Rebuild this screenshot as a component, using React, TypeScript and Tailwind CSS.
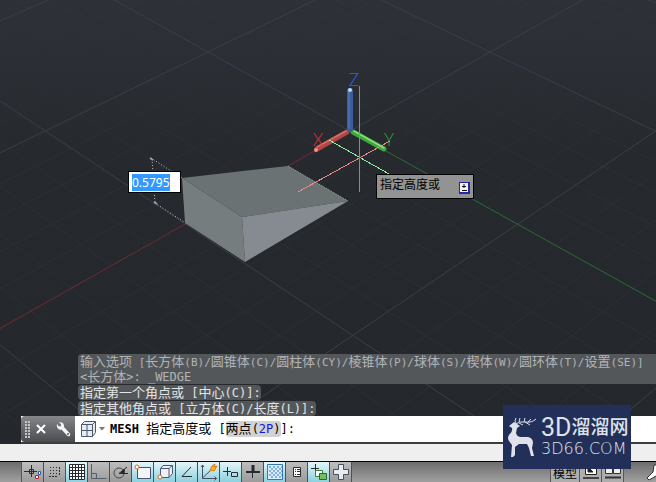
import type { ReactNode } from 'react'

type Point = [number, number]

// perspective mapping of the ground plane, one major cell = one unit
const ORIGIN: Point = [350, 131]
const AX = 208 * 1.0825 - 350
const BX = 490 * 1.0813 - 350
const AY = 52 * 1.0825 - 131
const BY = 52 * 1.0813 - 131

function project(u: number, v: number): Point {
  const w = 1 + 0.0825 * u + 0.0813 * v
  return [(AX * u + BX * v + ORIGIN[0]) / w, (AY * u + BY * v + ORIGIN[1]) / w]
}

function segment(a: Point, b: Point) {
  return `M${a.join(' ')}L${b.join(' ')}`
}

function gridPath(major: boolean) {
  const parts: string[] = []
  for (let i = -20; i <= 20; i++) {
    if ((i % 5 === 0) !== major) continue
    const k = i / 5
    // the near halves of the two axes have their own colours
    parts.push(segment(project(k, i === 0 ? 0 : -4), project(k, 4)))
    parts.push(segment(project(i === 0 ? 0 : -4, k), project(4, k)))
  }
  return parts.join('')
}

function Scene() {
  return (
    <svg
      className="absolute inset-0 h-full w-full"
      viewBox="0 0 656 444"
      preserveAspectRatio="xMinYMin slice"
      fill="none"
    >
      <defs>
        <linearGradient id="sky" x1="0" y1="0" x2="0" y2="1">
          <stop offset="0" stopColor="#2e3137" />
          <stop offset="0.35" stopColor="#26292e" />
          <stop offset="1" stopColor="#24282c" />
        </linearGradient>
      </defs>
      <rect width="656" height="444" fill="url(#sky)" />
      <path d={gridPath(false)} stroke="#2c3036" />
      <path d={gridPath(true)} stroke="#3b3e48" />
      <path d={segment(ORIGIN, project(0, -4))} stroke="#74292f" />
      <path d={segment(ORIGIN, project(-4, 0))} stroke="#2d6a34" />

      <g stroke="#c4c8cc" strokeDasharray="1 2">
        <path d="M151 158L182 178" />
        <path d="M152 159L155 203" />
        <path d="M155 203L184 222" />
      </g>
      <path d="M150 158l3 2M154 202l3 2" stroke="#9a9ea3" strokeWidth="2" />

      <path d="M182 178L288 166L348 201L242 217Z" fill="#6a7274" />
      <path d="M182 178L242 217L245 262L185 223Z" fill="#757d7f" />
      <path d="M242 217L348 201L245 262Z" fill="#858b91" />
      <path d="M288 166L348 201" stroke="#a5abae" strokeDasharray="1 1" />

      <g strokeLinecap="round">
        <path d="M347 132L317 149" stroke="#b54445" strokeWidth="5" />
        <path d="M346 131L317 147" stroke="#d36e6b" strokeWidth="1.500" />
        <path d="M353 132L384 149" stroke="#3fa83c" strokeWidth="5" />
        <path d="M354 131L384 148" stroke="#7fe279" strokeWidth="1.500" />
        <path d="M350 91L350 129" stroke="#3c5d9b" strokeWidth="6" />
        <path d="M349 92L349 128" stroke="#4a6dac" strokeWidth="2" />
      </g>
      <circle cx="350" cy="90" r="2" fill="#b8dcf8" />
      <circle cx="316" cy="150" r="2" fill="#e8958f" />

      <g className="font-[Lato,sans-serif] font-light" fontSize="17" textAnchor="middle">
        <text x="354" y="86" fill="#2c62f0">Z</text>
        <text x="318" y="146" fill="#e5303f">X</text>
        <text x="389" y="146" fill="#2fa035">Y</text>
      </g>

      <g shapeRendering="crispEdges">
        <path d="M329 140L389 174" stroke="#90ee9a" />
        <path d="M298 192L390 141" stroke="#e88a8c" />
        <path d="M359 86h1v106h-1z" fill="#7f7df0" />
      </g>
    </svg>
  )
}

// latin runs are set in the monospaced face, smaller than the hanzi
function Prompt({ text, small }: { text: string; small?: boolean }) {
  return (
    <>
      {text.split(/([\x20-\x7e]+)/).map((run, i) =>
        i % 2 ? (
          <span key={i} className={small ? 'text-[11px]' : 'text-[12px]'}>{run}</span>
        ) : (
          run
        ),
      )}
    </>
  )
}

function History() {
  const line = 'h-[15px] whitespace-pre pl-[2px] leading-[15px]'
  return (
    <div className="relative ml-[78px] flex flex-col items-start gap-px overflow-hidden text-[13px] text-[#e2e4e5]">
      <div className="w-full rounded-tl-sm bg-[#54575a] text-[#b1b4b6]">
        <p className={line}>
          <Prompt
            small
            text="输入选项 [长方体(B)/圆锥体(C)/圆柱体(CY)/棱锥体(P)/球体(S)/楔体(W)/圆环体(T)/设置(SE)]"
          />
        </p>
        <p className={line}>
          <Prompt text="<长方体>: _WEDGE" />
        </p>
      </div>
      <p className={`${line} rounded-sm bg-[#54575a]`}>
        <Prompt text="指定第一个角点或 [中心(C)]:" />
      </p>
      <p className={`${line} rounded-sm bg-[#54575a]`}>
        <Prompt text="指定其他角点或 [立方体(C)/长度(L)]:" />
      </p>
    </div>
  )
}

function CommandLine() {
  return (
    <div className="relative ml-[21px] flex h-7 border-b-2 border-[#3b3d40] bg-white text-[13px] text-black">
      <div className="flex w-[54px] items-center rounded-l-sm bg-gradient-to-b from-[#85878a] to-[#4a4c4f] pl-1">
        <svg width="6" height="17" viewBox="0 0 6 17" fill="#c5c6c8">
          {[0, 3, 6, 9, 12, 15].map((y) => (
            <path key={y} d={`M0 ${y}h2v2h-2zM3 ${y}h2v2h-2z`} />
          ))}
        </svg>
        <button aria-label="关闭" className="ml-[5px]">
          <svg width="10" height="10" viewBox="0 0 10 10" stroke="#fff" strokeWidth="2">
            <path d="M1 1l8 8M9 1L1 9" />
          </svg>
        </button>
        <button aria-label="自定义" className="ml-[10px]">
          <svg width="15" height="15" viewBox="0 0 15 15" fill="#f4f4f4">
            <path d="M1 2L3 4.500L5 4L5 2L3 0.500C5.500-.5 8.500 1 8 5L14 11.500C15 13.500 13 15 11.500 14L5.500 7.500C3 8.500 0 6 1 2Z" />
            <circle cx="12" cy="12" r="1" fill="#5a5c5f" />
          </svg>
        </button>
      </div>
      <button aria-label="最近使用的命令" className="ml-[5px] flex items-center gap-[2px]">
        <svg width="17" height="17" viewBox="0 0 17 17" stroke="#4a586c" fill="#e6edf5">
          <path d="M1.500 3.500L4.500 0.500H15.500V11.500L12.500 15.500H1.500Z" />
          <path d="M1.500 3.500H12.500V15.500M12.500 3.500L15.500 0.500M7 3.500V15.500M1.500 9.500H12.500" fill="none" />
        </svg>
        <svg width="6" height="4" viewBox="0 0 6 4" fill="#777"><path d="M0 0h6L3 3.500z" /></svg>
      </button>
      <p className="ml-[5px] whitespace-pre leading-[26px]">
        <b className="text-[12px]">MESH</b>
        <Prompt text=" 指定高度或 [" />
        <button className="rounded-[3px] bg-[#d2d2d2] leading-4">
          两点<span className="text-[12px]">(<span className="text-[#1414e0]">2P</span>)</span>
        </button>
        <Prompt text="]:" />
      </p>
    </div>
  )
}

const toggles: { name: string; on?: boolean; icon: ReactNode }[] = [
  { name: '推断约束', icon: <><path d="M0 8.500h13M7.500 2v12M5.500 6.500h4v4h-4z" /><path d="M14.500 8.500h2v3h-2z" stroke="#2858b0" fill="#fff" /><path d="M11.500 12.500h3v3h-3z" stroke="#c02020" fill="#fff" /></> },
  { name: '捕捉模式', icon: <><path d="M4 4.500h9M4 7.500h9M4 10.500h7" strokeDasharray="1 2" /><path d="M3 13.500h9M13.500 4v9" strokeDasharray="2 1" /></> },
  { name: '栅格显示', on: true, icon: <path d="M1.500 1.500h15v15h-15zM4.500 1v15M7.500 1v15M10.500 1v15M13.500 1v15M1 4.500h16M1 7.500h16M1 10.500h16M1 13.500h16" fill="#fff" /> },
  { name: '正交模式', icon: <path d="M1.500 1v14.500h15M1.500 10.500h5v5" stroke="#54606a" /> },
  { name: '极轴追踪', icon: <><circle cx="7" cy="10" r="5" stroke="#44484c" /><path d="M7 10.500L15 4M7 10.500h9M12 6v4" /><path d="M9 9.500l3-3v3z" fill="#111" /></> },
  { name: '对象捕捉', on: true, icon: <><path d="M3.500 4.500h13v11h-13z" fill="#f2f4f8" stroke="#43536c" /><circle cx="3" cy="4" r="2" fill="#fff" stroke="#e06a20" /></> },
  { name: '三维对象捕捉', on: true, icon: <><path d="M4.500 5.500L7 2.500h9.500v8L13 14.500H4.500zM4.500 5.500H13v9M13 5.500l3.500-3" fill="#eef0f6" stroke="#4b5a70" /><circle cx="4" cy="14" r="2" fill="#fff" stroke="#e06a20" /></> },
  { name: '对象捕捉追踪', on: true, icon: <path d="M13 4L4 13.500h10" /> },
  { name: '动态UCS', on: true, icon: <><path d="M2.500 2v13.500h14M2.500 15L12 6M1 4l1.500-2L4 4M14.500 13.500l2 2-2 2" stroke="#405060" /><path d="M10 8l2-5 3-2-1 3 3-1-3 5-2-1z" fill="#ffb420" stroke="#d97a10" /></> },
  { name: '动态输入', on: true, icon: <path d="M1 8.500h8M5.500 4v9M9.500 9.500h6v4h-6z" /> },
  { name: '线宽', icon: <><path d="M2 9h14" strokeWidth="2" /><path d="M8.500 3v12" /><path d="M9 2v7" strokeWidth="3" /></> },
  { name: '透明度', on: true, icon: <><path d="M1.500 1.500h15v15h-15z" fill="#d8ecfa" stroke="#3578b8" /><path d="M3 4h13M3 8h13M3 12h13" strokeDasharray="2 2" strokeWidth="2" stroke="#83b3de" /><path d="M5 6h11M5 10h11M5 14h11" strokeDasharray="2 2" strokeWidth="2" stroke="#83b3de" /></> },
  { name: '快捷特性', icon: <><path d="M5.500 4.500h7v9h-7z" fill="#fff" /><path d="M7 6.500h1M9 6.500h3M7 8.500h1M9 8.500h3M7 11.500h1M9 11.500h3" /></> },
  { name: '选择循环', on: true, icon: <><path d="M1 5.500h8M5.500 1v8" /><path d="M5.500 7.500h7v6h-7z" fill="#fff" stroke="#348034" /><path d="M9.500 10.500h7v6h-7z" fill="#77bd5b" stroke="#286928" /></> },
  { name: '注释监视器', icon: <path d="M6.500 1.500h5v5h5v5h-5v5h-5v-5h-5v-5h5z" fill="#e8ecf0" stroke="#45505c" /> },
]

function StatusBar() {
  const tab = 'flex h-full items-start justify-center border-r border-[#55585a] bg-[#aeaeae]'
  return (
    <footer className="flex h-[21px] shrink-0 overflow-hidden border-t border-black bg-gradient-to-b from-[#6d6d6d] to-[#a0a0a0] pl-[21px]">
      <div className="flex border-l border-[#55585a]">
        {toggles.map(({ name, on, icon }) => (
          <button
            key={name}
            aria-label={name}
            aria-pressed={!!on}
            className={`flex w-[22px] justify-center border-r border-[#4c5254] pt-px ${
              on ? 'bg-gradient-to-b from-[#e2f6fa] to-[#8ed0de]' : 'bg-gradient-to-b from-[#bdbdbd] to-[#9c9c9c]'
            }`}
          >
            <svg width="18" height="18" viewBox="0 0 18 18" fill="none" stroke="#282b2f">
              {icon}
            </svg>
          </button>
        ))}
      </div>
      <div className="mr-[22px] ml-auto flex">
        <button className={`${tab} w-[30px] border-l text-[12px] leading-[24px] text-black`}>模型</button>
        <button aria-label="布局" className={`${tab} w-[22px]`}>
          <svg width="18" height="18" viewBox="0 0 18 18" fill="#fff" stroke="#222">
            <path d="M3.500 1.500h11v11h-11z" />
            <path d="M6 5l5 5H6z" fill="#222" />
            <path d="M1 16h16" strokeWidth="2" stroke="#444" />
          </svg>
        </button>
        <button aria-label="快速查看图形" className={`${tab} w-[22px]`}>
          <svg width="18" height="18" viewBox="0 0 18 18" fill="#eee" stroke="#333">
            <path d="M1.500 3.500h7v8h-7zM9.500 3.500h7v8h-7z" />
            <path d="M1 15.500h16" strokeWidth="2" />
          </svg>
        </button>
      </div>
      <button aria-label="注释比例" className="-mr-2 shrink-0">
        <svg width="18" height="18" viewBox="0 0 18 18" fill="#fff" stroke="#333">
          <path d="M8 2h3l1 7 5 5v3l-7-4-7 4-2-2 6-6z" />
        </svg>
      </button>
    </footer>
  )
}

function Logo() {
  return (
    <div className="absolute right-[25px] bottom-[13px] flex h-16 w-32 items-center bg-[#222f58] text-[#dfe2ea]">
      <svg className="ml-1 shrink-0" width="32" height="42" viewBox="0 0 32 42" fill="none" stroke="#dfe2ea">
        <path
          d="M2 10L7 6L10 8L13 10L10 12L9 17Q10 21 14 21L21 21Q26 22 26 27L25 32L27 40H24L22 32L20 28L12 28L8 31L8 39L6 41H4L5 29L2 25Q0 22 2 19Q6 16 5 12Z"
          fill="#dfe2ea"
          stroke="none"
        />
        <path d="M9 8Q12 5 18 6Q25 7 29 3M9 7Q7 5 9 2M12 6L13 2M17 6L18 2M21 6L24 3M12 7L16 9M18 6L23 9" />
      </svg>
      <div className="ml-[2px] whitespace-nowrap">
        <p className="flex items-center font-[Roboto,'Noto_Sans_CJK_SC',sans-serif] text-[25px] leading-[24px]">
          3D<span className="text-[19px] font-medium">溜溜网</span>
        </p>
        <p className="font-['DejaVu_Sans',sans-serif] text-[16px] leading-[18px] font-extralight">3D66.COM</p>
      </div>
    </div>
  )
}

export default function App() {
  return (
    <div className="relative flex h-screen flex-col overflow-hidden bg-[#24282c] font-['DejaVu_Sans_Mono','Noto_Sans_CJK_SC',monospace]">
      <main className="relative flex flex-1 flex-col justify-end overflow-hidden">
        <Scene />
        <div className="absolute top-[171px] left-[128px] flex h-[22px] w-[53px] items-center border border-black bg-white pl-[3px]">
          <input
            aria-label="高度"
            defaultValue="0.5795"
            className="h-[17px] w-[38px] bg-[#3399ff] font-['Noto_Sans',sans-serif] text-[12px] leading-[17px] text-white outline-none"
          />
        </div>
        <div className="absolute top-[174px] left-[376px] flex h-[25px] w-[98px] justify-between border border-black bg-[#939393] pr-[3px] pl-[3px] text-[12px] leading-[20px] text-black">
          指定高度或
          <button aria-label="选项" className="mt-[7px] h-[12px] w-[11px]">
            <svg width="11" height="12" viewBox="0 0 11 12" fill="none">
              <path d="M0 0h11v12h-11z" fill="#2626a8" />
              <path d="M1 1h8v9h-8z" fill="#f2f2f2" />
              <path d="M5 2v4M3 4.500h4M3 8.500h5" stroke="#111" />
            </svg>
          </button>
        </div>
        <History />
        <CommandLine />
      </main>
      <div className="h-[17px] shrink-0 bg-[#efefef]" />
      <StatusBar />
      <Logo />
    </div>
  )
}
